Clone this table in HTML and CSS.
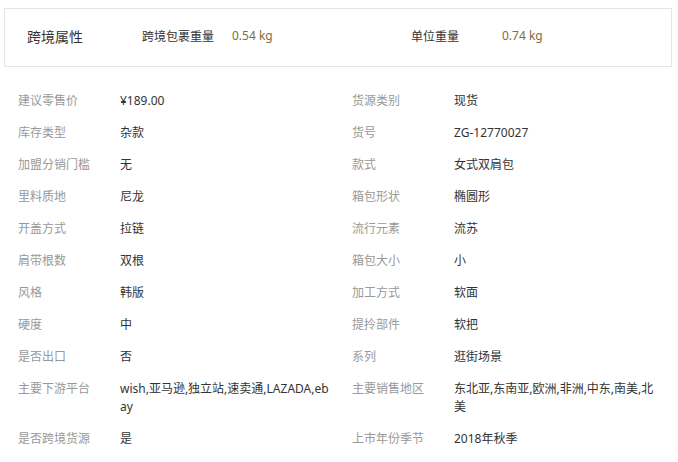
FILE: index.html
```html
<!DOCTYPE html>
<html lang="zh-CN">
<head>
<meta charset="utf-8">
<title>商品属性</title>
<link rel="stylesheet" href="styles.css">
</head>
<body>
<section class="cross">
  <h2 class="cross-title">跨境属性</h2>
  <div class="cross-item">
    <span class="cross-label">跨境包裹重量</span>
    <span class="cross-value">0.54 kg</span>
  </div>
  <div class="cross-item">
    <span class="cross-label">单位重量</span>
    <span class="cross-value">0.74 kg</span>
  </div>
</section>

<section class="attrs">
  <div class="attr"><span class="attr-label">建议零售价</span><span class="attr-value">¥189.00</span></div>
  <div class="attr"><span class="attr-label">货源类别</span><span class="attr-value">现货</span></div>
  <div class="attr"><span class="attr-label">库存类型</span><span class="attr-value">杂款</span></div>
  <div class="attr"><span class="attr-label">货号</span><span class="attr-value">ZG-12770027</span></div>
  <div class="attr"><span class="attr-label">加盟分销门槛</span><span class="attr-value">无</span></div>
  <div class="attr"><span class="attr-label">款式</span><span class="attr-value">女式双肩包</span></div>
  <div class="attr"><span class="attr-label">里料质地</span><span class="attr-value">尼龙</span></div>
  <div class="attr"><span class="attr-label">箱包形状</span><span class="attr-value">椭圆形</span></div>
  <div class="attr"><span class="attr-label">开盖方式</span><span class="attr-value">拉链</span></div>
  <div class="attr"><span class="attr-label">流行元素</span><span class="attr-value">流苏</span></div>
  <div class="attr"><span class="attr-label">肩带根数</span><span class="attr-value">双根</span></div>
  <div class="attr"><span class="attr-label">箱包大小</span><span class="attr-value">小</span></div>
  <div class="attr"><span class="attr-label">风格</span><span class="attr-value">韩版</span></div>
  <div class="attr"><span class="attr-label">加工方式</span><span class="attr-value">软面</span></div>
  <div class="attr"><span class="attr-label">硬度</span><span class="attr-value">中</span></div>
  <div class="attr"><span class="attr-label">提拎部件</span><span class="attr-value">软把</span></div>
  <div class="attr"><span class="attr-label">是否出口</span><span class="attr-value">否</span></div>
  <div class="attr"><span class="attr-label">系列</span><span class="attr-value">逛街场景</span></div>
  <div class="attr"><span class="attr-label">主要下游平台</span><span class="attr-value">wish,亚马逊,独立站,速卖通,LAZADA,ebay</span></div>
  <div class="attr"><span class="attr-label">主要销售地区</span><span class="attr-value">东北亚,东南亚,欧洲,非洲,中东,南美,北美</span></div>
  <div class="attr"><span class="attr-label">是否跨境货源</span><span class="attr-value">是</span></div>
  <div class="attr"><span class="attr-label">上市年份季节</span><span class="attr-value">2018年秋季</span></div>
</section>
</body>
</html>
```
FILE: styles.css
```css
html, body {
  margin: 0;
  padding: 0;
  background: #fff;
}

body {
  font-family: "Noto Sans", "Noto Sans CJK SC", sans-serif;
  font-size: 12px;
  color: #333;
}

.cross {
  margin: 8px 6px 0 4px;
  height: 54px;
  padding-bottom: 3px;
  border: 1px solid #e5e5e5;
  display: grid;
  grid-template-columns: 115px 269px 1fr;
  align-items: center;
  padding-left: 22px;
}

.cross-title {
  margin: 0;
  font-size: 14px;
  font-weight: normal;
  color: #333;
}

.cross-item {
  display: flex;
}

.cross-item:nth-of-type(1) .cross-label { width: 90px; }
.cross-item:nth-of-type(2) .cross-label { width: 91px; }

.cross-label {
  color: #333;
}

.cross-value {
  color: #856a40;
}

.attrs {
  margin-top: 18px;
  padding-left: 18px;
  display: grid;
  grid-template-columns: 334px 1fr;
}

.attr {
  display: flex;
  align-items: flex-start;
  padding: 7px 0;
  line-height: 18px;
}

.attr-label {
  width: 102px;
  flex: none;
  color: #999;
}

.attr-value {
  width: 211px;
  color: #333;
  word-break: break-all;
}
```
